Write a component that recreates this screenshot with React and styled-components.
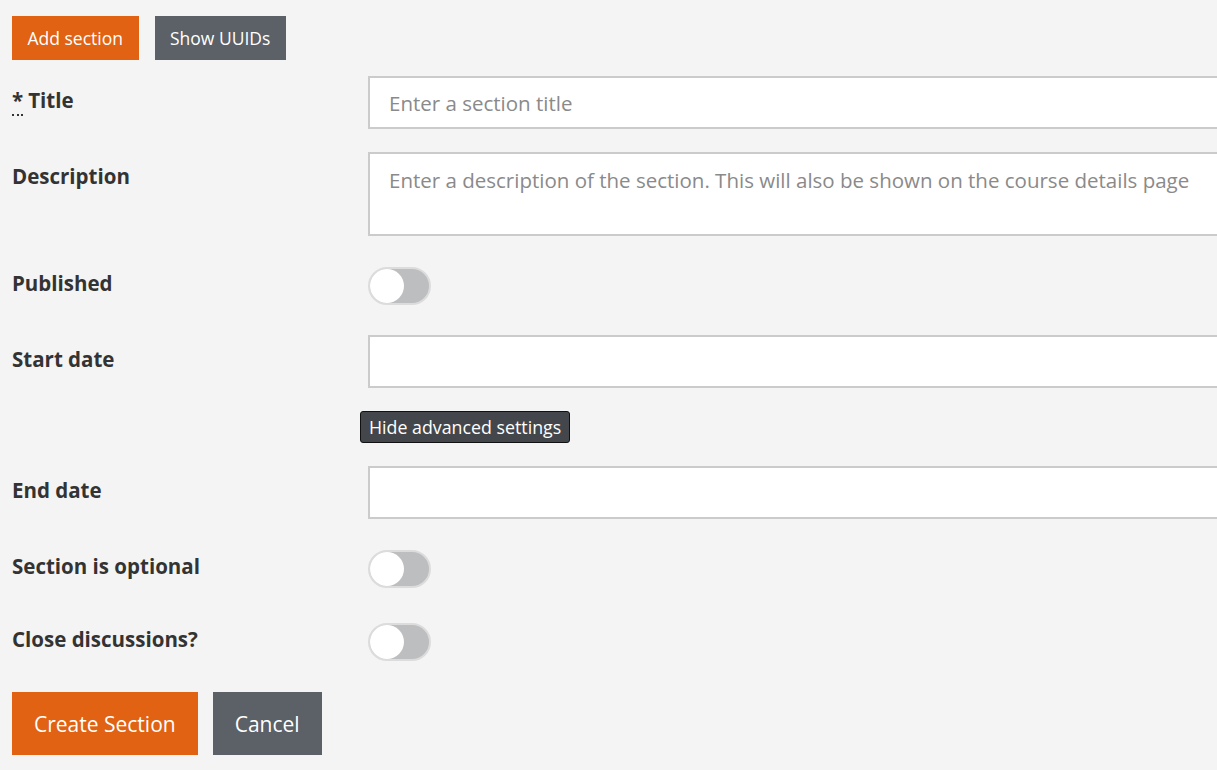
import React from "react";
import styled, { createGlobalStyle } from "styled-components";

const GlobalStyle = createGlobalStyle`
  html, body {
    margin: 0;
    padding: 0;
    background: #f4f4f4;
    overflow: hidden;
  }
  body {
    font-family: "Open Sans", "Noto Sans", sans-serif;
    color: #333;
  }
`;

const Page = styled.div`
  padding: 16px 12px;
  width: 1300px;
`;

const Toolbar = styled.div`
  display: flex;
  gap: 16px;
  margin-bottom: 16px;
`;

const Button = styled.button`
  border: none;
  border-radius: 0;
  font-family: inherit;
  color: #fff;
  background: ${(p) => (p.$primary ? "#e06212" : "#5c6067")};
  font-size: ${(p) => (p.$big ? "21px" : "17.5px")};
  height: ${(p) => (p.$big ? "63px" : "44px")};
  padding: ${(p) => (p.$big ? "0 22px" : "0 15.5px")};
  cursor: pointer;
`;

const Row = styled.div`
  display: grid;
  grid-template-columns: 356px 900px;
  min-height: 53px;
  margin-bottom: ${(p) => p.$gap ?? 23}px;
`;

const Label = styled.label`
  font-weight: 700;
  font-size: 20.5px;
  line-height: 26px;
  padding-top: 11px;
  color: #333;
`;

const Req = styled.abbr`
  text-decoration: none;
  border-bottom: 2px dotted #333;
  margin-right: 5px;
`;

const Input = styled.input`
  box-sizing: border-box;
  width: 100%;
  height: 53px;
  border: 2px solid #cbcbcb;
  background: #fff;
  padding: 0 19px;
  font-family: inherit;
  font-size: 20.5px;
  color: #333;
  outline: none;
  &::placeholder {
    color: #8a8a8a;
  }
`;

const TextArea = styled.textarea`
  box-sizing: border-box;
  width: 100%;
  height: 84px;
  border: 2px solid #cbcbcb;
  background: #fff;
  padding: 12px 19px;
  font-family: inherit;
  font-size: 20.5px;
  line-height: 28px;
  color: #333;
  resize: none;
  outline: none;
  &::placeholder {
    color: #8a8a8a;
  }
`;

const SwitchCell = styled.div`
  display: flex;
  align-items: center;
`;

const Switch = styled.span`
  box-sizing: border-box;
  display: inline-flex;
  align-items: center;
  width: 63px;
  height: 38px;
  border-radius: 19px;
  border: 2px solid #dcdcdc;
  background: #bdbec0;
`;

const Knob = styled.span`
  width: 34px;
  height: 34px;
  border-radius: 50%;
  background: #fff;
`;

const AdvancedRow = styled.div`
  margin-left: 348px;
  margin-bottom: 23px;
`;

const AdvancedToggle = styled.button`
  height: 32px;
  padding: 0 8px;
  background: #43474c;
  color: #fff;
  border: 1px solid #111;
  border-radius: 3px;
  font-family: inherit;
  font-size: 17.8px;
  cursor: pointer;
`;

const Actions = styled.div`
  display: flex;
  gap: 15px;
  margin-top: 24px;
`;

function Toggle() {
  return (
    <SwitchCell>
      <Switch>
        <Knob />
      </Switch>
    </SwitchCell>
  );
}

export default function App() {
  return (
    <Page>
      <GlobalStyle />
      <Toolbar>
        <Button $primary>Add section</Button>
        <Button>Show UUIDs</Button>
      </Toolbar>

      <Row>
        <Label>
          <Req title="required">*</Req>Title
        </Label>
        <Input placeholder="Enter a section title" />
      </Row>
      <Row>
        <Label>Description</Label>
        <TextArea placeholder="Enter a description of the section. This will also be shown on the course details page" />
      </Row>
      <Row>
        <Label>Published</Label>
        <Toggle />
      </Row>
      <Row>
        <Label>Start date</Label>
        <Input />
      </Row>
      <AdvancedRow>
        <AdvancedToggle>Hide advanced settings</AdvancedToggle>
      </AdvancedRow>
      <Row>
        <Label>End date</Label>
        <Input />
      </Row>
      <Row $gap={20}>
        <Label>Section is optional</Label>
        <Toggle />
      </Row>
      <Row $gap={0}>
        <Label>Close discussions?</Label>
        <Toggle />
      </Row>

      <Actions>
        <Button $primary $big>Create Section</Button>
        <Button $big>Cancel</Button>
      </Actions>
    </Page>
  );
}
